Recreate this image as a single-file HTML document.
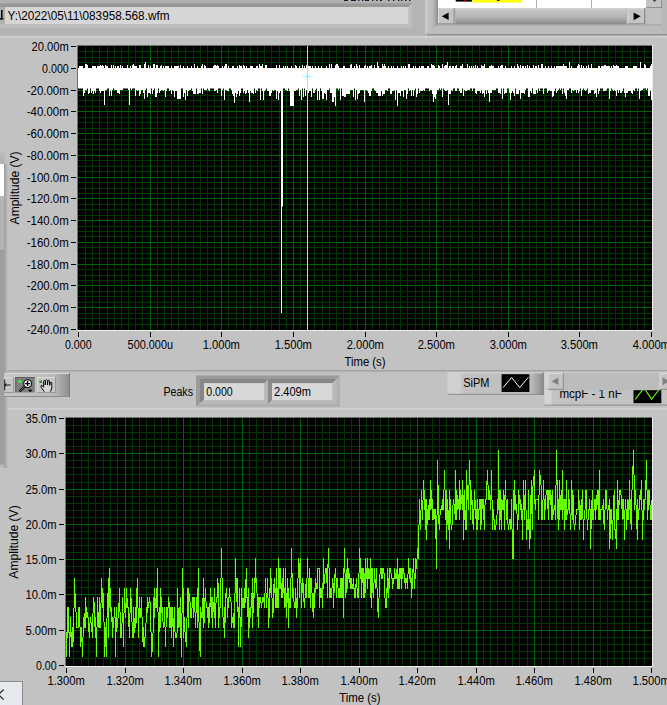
<!DOCTYPE html>
<html><head><meta charset="utf-8"><title>LabVIEW</title>
<style>html,body{margin:0;padding:0;background:#c2c2c2;overflow:hidden}body{width:667px;height:705px;font-family:"Liberation Sans",sans-serif}svg{display:block;position:absolute;left:0;top:0}text{font-family:"Liberation Sans",sans-serif}</style>
</head><body><svg width="667" height="705" viewBox="0 0 667 705" font-family="'Liberation Sans', sans-serif" font-size="12"><defs>
<linearGradient id="gthumb" x1="0" y1="0" x2="0" y2="1"><stop offset="0" stop-color="#cacaca"/><stop offset="0.55" stop-color="#b4b4b4"/><stop offset="1" stop-color="#888888"/></linearGradient>
<linearGradient id="gpal" x1="0" y1="0" x2="1" y2="0"><stop offset="0" stop-color="#c6c6c6"/><stop offset="0.75" stop-color="#bcbcbc"/><stop offset="1" stop-color="#8c8c8c"/></linearGradient>
<linearGradient id="gleg" x1="0" y1="0" x2="1" y2="0"><stop offset="0" stop-color="#d2d2d2"/><stop offset="0.12" stop-color="#d0d0d0"/><stop offset="0.16" stop-color="#c2c2c2"/><stop offset="0.86" stop-color="#bebebe"/><stop offset="1" stop-color="#8c8c8c"/></linearGradient>
<linearGradient id="gshadow" x1="0" y1="0" x2="1" y2="0"><stop offset="0" stop-color="#9c9c9c"/><stop offset="1" stop-color="#c2c2c2"/></linearGradient>
<linearGradient id="gframeL" x1="0" y1="0" x2="1" y2="0"><stop offset="0" stop-color="#cccccc"/><stop offset="0.6" stop-color="#bababa"/><stop offset="0.85" stop-color="#a0a0a0"/><stop offset="1" stop-color="#8a8a8a"/></linearGradient>
<linearGradient id="gup" x1="0" y1="0" x2="0" y2="1"><stop offset="0" stop-color="#c2c2c2"/><stop offset="1" stop-color="#a8a8a8"/></linearGradient>
</defs><rect x="0" y="0" width="667" height="705" fill="#c2c2c2" /><rect x="0" y="0" width="667" height="36" fill="#b4b4b4" /><rect x="0" y="0" width="412" height="28" fill="#acacac" /><rect x="0" y="0" width="412" height="3.5" fill="#b0b0b0" /><rect x="0" y="3.5" width="412" height="3.5" fill="#989898" /><polygon points="408.5,7 412,3.5 412,28 0,28 0,24 408.5,24" fill="#bebebe"/><rect x="5" y="7" width="403.5" height="17" fill="#d6d6d6" /><rect x="0" y="7" width="5" height="17" fill="#b0b0b0" /><rect x="0" y="18" width="3.4" height="1.6" fill="#000" /><rect x="1" y="10" width="1.6" height="8" fill="#000" /><text x="7.5" y="20" font-size="12" text-anchor="start" fill="#000" textLength="162" lengthAdjust="spacingAndGlyphs" >Y:\2022\05\11\083958.568.wfm</text><rect x="344" y="0" width="4" height="1" fill="#1c1c30" /><rect x="351" y="0" width="5" height="1" fill="#1c1c30" /><rect x="358" y="0" width="1.4" height="1" fill="#1c1c30" /><rect x="362" y="0" width="1.4" height="1" fill="#1c1c30" /><rect x="365" y="0" width="4" height="1" fill="#1c1c30" /><rect x="372" y="0" width="1.4" height="1" fill="#1c1c30" /><rect x="376" y="0" width="1.4" height="1" fill="#1c1c30" /><rect x="380" y="0" width="2" height="1" fill="#1c1c30" /><rect x="388" y="0" width="1.4" height="1" fill="#1c1c30" /><rect x="393" y="0" width="1.4" height="1" fill="#1c1c30" /><rect x="398" y="0" width="1.4" height="1" fill="#1c1c30" /><rect x="401" y="0" width="1.4" height="1" fill="#1c1c30" /><rect x="405" y="0" width="1.4" height="1" fill="#1c1c30" /><rect x="409" y="0" width="1.4" height="1" fill="#1c1c30" /><rect x="425" y="0" width="242" height="34" fill="#bcbcbc" /><rect x="425" y="0" width="13" height="34" fill="url(#gframeL)" /><polygon points="425,34 438,24.5 667,24.5 667,34" fill="#bcbcbc"/><rect x="438" y="24.3" width="229" height="1.2" fill="#a4a4a4" /><rect x="427" y="34" width="240" height="1.2" fill="#909090" /><rect x="662" y="0" width="5" height="34" fill="#b8b8b8" /><rect x="438" y="0" width="208" height="8.3" fill="#ffffff" /><rect x="455.7" y="0" width="16.5" height="1.6" fill="#000" /><rect x="464" y="0" width="1" height="1.6" fill="#e00000" /><rect x="472.3" y="0" width="49" height="2.6" fill="#ffff00" /><rect x="497" y="0" width="2.5" height="1" fill="#000" /><rect x="536" y="0" width="1" height="8.3" fill="#b0b0b0" /><rect x="591" y="0" width="1" height="8.3" fill="#b0b0b0" /><rect x="646" y="0" width="16" height="7.6" fill="#c4c4c4" /><rect x="646" y="7.2" width="16" height="0.8" fill="#808080" /><rect x="661.2" y="0" width="0.8" height="8" fill="#808080" /><path d="M652.5,0 L656.5,0 L654.5,2 Z" fill="#404040"/><rect x="646" y="8.3" width="16" height="16" fill="#c0c0c0" /><rect x="438" y="8.3" width="208" height="16" fill="#b0b0b0" /><rect x="455.5" y="8.3" width="171" height="16" fill="url(#gthumb)" /><rect x="455.5" y="8.3" width="171" height="0.8" fill="#d4d4d4" /><rect x="438" y="8.3" width="16.6" height="16" fill="#c4c4c4" /><rect x="438" y="8.3" width="16.6" height="1" fill="#dcdcdc" /><rect x="438" y="8.3" width="1" height="16" fill="#dcdcdc" /><rect x="438" y="23.3" width="16.6" height="1" fill="#8c8c8c" /><rect x="453.6" y="8.3" width="1" height="16" fill="#8c8c8c" /><rect x="627.5" y="8.3" width="17.5" height="16" fill="#c4c4c4" /><rect x="627.5" y="8.3" width="17.5" height="1" fill="#dcdcdc" /><rect x="627.5" y="8.3" width="1" height="16" fill="#dcdcdc" /><rect x="627.5" y="23.3" width="17.5" height="1" fill="#8c8c8c" /><rect x="644.0" y="8.3" width="1" height="16" fill="#8c8c8c" /><path d="M441.8,16.3 L448.6,12.6 L448.6,20 Z" fill="#000"/><path d="M640.6,16.3 L633.6,12.4 L633.6,20.2 Z" fill="#000"/><rect x="0" y="36" width="667" height="2" fill="#cecece" /><rect x="0" y="370" width="667" height="1.4" fill="#a2a2a2" /><rect x="0" y="371.4" width="667" height="1" fill="#b4b4b4" /><rect x="0" y="408" width="667" height="1.6" fill="#d0d0d0" /><linearGradient id="gtopfade" x1="0" y1="0" x2="0" y2="1"><stop offset="0" stop-color="#c2c2c2"/><stop offset="1" stop-color="#aeaeae"/></linearGradient><rect x="0" y="150" width="5" height="14" fill="url(#gtopfade)" /><rect x="4" y="164" width="4" height="304" fill="url(#gshadow)" /><rect x="0" y="164" width="4" height="32.3" fill="#ffffff" /><rect x="0" y="196.3" width="4" height="53.5" fill="#b4b4b4" /><rect x="0" y="249.8" width="4" height="215" fill="#9e9e9e" /><rect x="0" y="464.5" width="4" height="3.5" fill="#bababa" /><rect x="77" y="45" width="576" height="286" fill="#eeeeee" /><rect x="77" y="45" width="575" height="285" fill="#707070" /><rect x="78" y="46" width="574" height="284" fill="#000" /><path d="M85.5,46V330M92.5,46V330M99.5,46V330M107.5,46V330M114.5,46V330M121.5,46V330M128.5,46V330M135.5,46V330M142.5,46V330M157.5,46V330M164.5,46V330M171.5,46V330M178.5,46V330M185.5,46V330M193.5,46V330M200.5,46V330M207.5,46V330M214.5,46V330M228.5,46V330M236.5,46V330M243.5,46V330M250.5,46V330M257.5,46V330M264.5,46V330M271.5,46V330M279.5,46V330M286.5,46V330M300.5,46V330M307.5,46V330M314.5,46V330M322.5,46V330M329.5,46V330M336.5,46V330M343.5,46V330M350.5,46V330M357.5,46V330M372.5,46V330M379.5,46V330M386.5,46V330M393.5,46V330M400.5,46V330M407.5,46V330M415.5,46V330M422.5,46V330M429.5,46V330M443.5,46V330M450.5,46V330M458.5,46V330M465.5,46V330M472.5,46V330M479.5,46V330M486.5,46V330M493.5,46V330M501.5,46V330M515.5,46V330M522.5,46V330M529.5,46V330M536.5,46V330M544.5,46V330M551.5,46V330M558.5,46V330M565.5,46V330M572.5,46V330M587.5,46V330M594.5,46V330M601.5,46V330M608.5,46V330M615.5,46V330M622.5,46V330M630.5,46V330M637.5,46V330M644.5,46V330M78,51.5H652M78,57.5H652M78,62.5H652M78,73.5H652M78,79.5H652M78,84.5H652M78,95.5H652M78,100.5H652M78,106.5H652M78,117.5H652M78,122.5H652M78,128.5H652M78,139.5H652M78,144.5H652M78,149.5H652M78,160.5H652M78,166.5H652M78,171.5H652M78,182.5H652M78,188.5H652M78,193.5H652M78,204.5H652M78,209.5H652M78,215.5H652M78,226.5H652M78,231.5H652M78,236.5H652M78,247.5H652M78,253.5H652M78,258.5H652M78,269.5H652M78,275.5H652M78,280.5H652M78,291.5H652M78,296.5H652M78,302.5H652M78,313.5H652M78,318.5H652M78,324.5H652" stroke="#003700" stroke-width="1" fill="none" shape-rendering="crispEdges"/><path d="M150.5,46V330M221.5,46V330M293.5,46V330M365.5,46V330M436.5,46V330M508.5,46V330M579.5,46V330M78,68.5H652M78,90.5H652M78,111.5H652M78,133.5H652M78,155.5H652M78,177.5H652M78,198.5H652M78,220.5H652M78,242.5H652M78,264.5H652M78,285.5H652M78,307.5H652" stroke="#006400" stroke-width="1" fill="none" shape-rendering="crispEdges"/><rect x="65" y="417" width="588" height="250" fill="#eeeeee" /><rect x="65" y="417" width="587" height="249" fill="#707070" /><rect x="66" y="418" width="586" height="248" fill="#000" /><path d="M73.5,418V666M81.5,418V666M88.5,418V666M95.5,418V666M103.5,418V666M110.5,418V666M117.5,418V666M132.5,418V666M139.5,418V666M146.5,418V666M154.5,418V666M161.5,418V666M168.5,418V666M176.5,418V666M190.5,418V666M198.5,418V666M205.5,418V666M212.5,418V666M220.5,418V666M227.5,418V666M234.5,418V666M249.5,418V666M256.5,418V666M263.5,418V666M271.5,418V666M278.5,418V666M285.5,418V666M293.5,418V666M307.5,418V666M315.5,418V666M322.5,418V666M329.5,418V666M337.5,418V666M344.5,418V666M351.5,418V666M366.5,418V666M373.5,418V666M380.5,418V666M388.5,418V666M395.5,418V666M402.5,418V666M410.5,418V666M424.5,418V666M432.5,418V666M439.5,418V666M446.5,418V666M454.5,418V666M461.5,418V666M468.5,418V666M483.5,418V666M490.5,418V666M497.5,418V666M505.5,418V666M512.5,418V666M519.5,418V666M527.5,418V666M541.5,418V666M549.5,418V666M556.5,418V666M563.5,418V666M571.5,418V666M578.5,418V666M585.5,418V666M600.5,418V666M607.5,418V666M614.5,418V666M622.5,418V666M629.5,418V666M636.5,418V666M644.5,418V666M66,425.5H652M66,432.5H652M66,439.5H652M66,446.5H652M66,460.5H652M66,467.5H652M66,474.5H652M66,482.5H652M66,496.5H652M66,503.5H652M66,510.5H652M66,517.5H652M66,531.5H652M66,538.5H652M66,545.5H652M66,552.5H652M66,566.5H652M66,573.5H652M66,580.5H652M66,587.5H652M66,601.5H652M66,609.5H652M66,616.5H652M66,623.5H652M66,637.5H652M66,644.5H652M66,651.5H652M66,658.5H652" stroke="#003700" stroke-width="1" fill="none" shape-rendering="crispEdges"/><path d="M125.5,418V666M183.5,418V666M242.5,418V666M300.5,418V666M359.5,418V666M417.5,418V666M476.5,418V666M534.5,418V666M593.5,418V666M66,453.5H652M66,489.5H652M66,524.5H652M66,559.5H652M66,594.5H652M66,630.5H652" stroke="#006400" stroke-width="1" fill="none" shape-rendering="crispEdges"/><path d="M78.5,67.8V88.0M79.5,66.4V88.0M80.5,66.4V86.5M81.5,66.4V86.5M82.5,66.4V86.5M83.5,67.8V95.5M84.5,67.8V92.5M85.5,63.6V89.5M86.5,63.6V89.5M87.5,65.0V88.0M88.5,67.8V94.0M89.5,67.8V92.5M90.5,67.8V86.5M91.5,67.8V92.5M92.5,66.4V91.0M93.5,66.4V94.0M94.5,66.4V91.0M95.5,66.4V92.5M96.5,67.8V88.0M97.5,66.4V88.0M98.5,66.4V88.0M99.5,66.4V91.0M100.5,65.0V92.5M101.5,66.4V91.0M102.5,65.0V91.0M103.5,66.4V91.0M104.5,69.2V104.5M105.5,65.0V89.5M106.5,66.4V89.5M107.5,66.4V88.0M108.5,67.8V88.0M109.5,67.8V95.5M110.5,67.8V91.0M111.5,65.0V95.5M112.5,67.8V89.5M113.5,65.0V88.0M114.5,67.8V89.5M115.5,66.4V89.5M116.5,67.8V89.5M117.5,66.4V92.5M118.5,66.4V92.5M119.5,67.8V94.0M120.5,65.0V89.5M121.5,67.8V89.5M122.5,66.4V89.5M123.5,67.8V88.0M124.5,67.8V88.0M125.5,67.8V88.0M126.5,67.8V88.0M127.5,65.0V88.0M128.5,67.8V89.5M129.5,67.8V104.5M130.5,66.4V86.5M131.5,67.8V89.5M132.5,65.0V85.0M133.5,63.6V88.0M134.5,66.4V88.0M135.5,66.4V95.5M136.5,66.4V89.5M137.5,67.8V91.0M138.5,69.2V89.5M139.5,65.0V95.5M140.5,65.0V94.0M141.5,67.8V89.5M142.5,67.8V89.5M143.5,67.8V92.5M144.5,63.6V98.5M145.5,62.2V89.5M146.5,67.8V88.0M147.5,67.8V97.0M148.5,65.0V92.5M149.5,69.2V92.5M150.5,66.4V94.0M151.5,69.2V88.0M152.5,69.2V94.0M153.5,63.6V89.5M154.5,63.6V88.0M155.5,67.8V97.0M156.5,65.0V97.0M157.5,65.0V92.5M158.5,67.8V88.0M159.5,67.8V92.5M160.5,66.4V91.0M161.5,65.0V89.5M162.5,67.8V89.5M163.5,66.4V91.0M164.5,67.8V89.5M165.5,66.4V97.0M166.5,66.4V91.0M167.5,66.4V85.0M168.5,66.4V85.0M169.5,69.2V91.0M170.5,69.2V89.5M171.5,66.4V94.0M172.5,67.8V89.5M173.5,67.8V91.0M174.5,66.4V97.0M175.5,66.4V91.0M176.5,66.4V91.0M177.5,66.4V98.5M178.5,66.4V98.5M179.5,67.8V98.5M180.5,65.0V98.5M181.5,67.8V86.5M182.5,67.8V86.5M183.5,66.4V97.0M184.5,67.8V92.5M185.5,67.8V100.0M186.5,67.8V89.5M187.5,66.4V95.5M188.5,67.8V91.0M189.5,67.8V89.5M190.5,69.2V89.5M191.5,66.4V85.0M192.5,67.8V91.0M193.5,67.8V94.0M194.5,63.6V94.0M195.5,67.8V94.0M196.5,69.2V88.0M197.5,66.4V94.0M198.5,67.8V94.0M199.5,70.8V92.5M200.5,67.8V92.5M201.5,66.4V86.5M202.5,63.6V94.0M203.5,67.8V86.5M204.5,65.0V89.5M205.5,66.4V89.5M206.5,67.8V89.5M207.5,67.8V86.5M208.5,67.8V89.5M209.5,69.2V91.0M210.5,67.8V85.0M211.5,67.8V85.0M212.5,69.2V88.0M213.5,66.4V88.0M214.5,65.0V91.0M215.5,65.0V91.0M216.5,66.4V89.5M217.5,65.0V92.5M218.5,66.4V86.5M219.5,67.8V86.5M220.5,69.2V88.0M221.5,67.8V95.5M222.5,66.4V89.5M223.5,67.8V88.0M224.5,66.4V100.0M225.5,63.6V89.5M226.5,63.6V89.5M227.5,67.8V91.0M228.5,66.4V91.0M229.5,67.8V86.5M230.5,67.8V86.5M231.5,67.8V89.5M232.5,66.4V94.0M233.5,66.4V95.5M234.5,67.8V103.0M235.5,67.8V92.5M236.5,67.8V97.0M237.5,66.4V94.0M238.5,67.8V91.0M239.5,65.0V95.5M240.5,66.4V92.5M241.5,66.4V86.5M242.5,67.8V88.0M243.5,65.0V92.5M244.5,66.4V91.0M245.5,67.8V94.0M246.5,66.4V92.5M247.5,67.8V89.5M248.5,67.8V92.5M249.5,67.8V101.5M250.5,66.4V91.0M251.5,66.4V92.5M252.5,66.4V92.5M253.5,67.8V94.0M254.5,67.8V85.0M255.5,67.8V92.5M256.5,66.4V89.5M257.5,66.4V91.0M258.5,67.8V88.0M259.5,63.6V85.0M260.5,66.4V100.0M261.5,66.4V88.0M262.5,63.6V91.0M263.5,67.8V100.0M264.5,67.8V91.0M265.5,65.0V89.5M266.5,65.0V85.0M267.5,67.8V91.0M268.5,67.8V91.0M269.5,67.8V95.5M270.5,67.8V95.5M271.5,67.8V92.5M272.5,70.8V89.5M273.5,67.8V91.0M274.5,67.8V89.5M275.5,67.8V89.5M276.5,65.0V98.5M277.5,67.8V91.0M278.5,67.8V100.0M279.5,65.0V92.5M280.5,70.8V91.0M281.5,69.2V91.0M282.5,69.2V94.0M283.5,66.4V86.5M284.5,70.8V86.5M285.5,66.4V89.5M286.5,69.2V89.5M287.5,66.4V91.0M288.5,67.8V88.0M289.5,67.8V91.0M290.5,67.8V106.0M291.5,66.4V106.0M292.5,67.8V106.0M293.5,67.8V106.0M294.5,67.8V91.0M295.5,65.0V91.0M296.5,66.4V89.5M297.5,67.8V89.5M298.5,67.8V88.0M299.5,66.4V95.5M300.5,67.8V89.5M301.5,67.8V100.0M302.5,65.0V85.0M303.5,67.8V97.0M304.5,66.4V85.0M305.5,67.8V95.5M306.5,65.0V89.5M307.5,67.8V91.0M308.5,66.4V92.5M309.5,66.4V91.0M310.5,66.4V91.0M311.5,69.2V97.0M312.5,66.4V88.0M313.5,67.8V92.5M314.5,67.8V92.5M315.5,66.4V89.5M316.5,67.8V85.0M317.5,67.8V100.0M318.5,66.4V91.0M319.5,67.8V100.0M320.5,69.2V85.0M321.5,66.4V91.0M322.5,67.8V98.5M323.5,67.8V98.5M324.5,67.8V92.5M325.5,67.8V94.0M326.5,66.4V100.0M327.5,67.8V89.5M328.5,67.8V89.5M329.5,63.6V88.0M330.5,67.8V92.5M331.5,63.6V92.5M332.5,67.8V101.5M333.5,67.8V101.5M334.5,67.8V97.0M335.5,65.0V106.0M336.5,63.6V88.0M337.5,63.6V86.5M338.5,66.4V89.5M339.5,67.8V85.0M340.5,67.8V100.0M341.5,67.8V88.0M342.5,67.8V95.5M343.5,66.4V95.5M344.5,66.4V97.0M345.5,67.8V97.0M346.5,67.8V94.0M347.5,69.2V94.0M348.5,67.8V94.0M349.5,70.8V94.0M350.5,65.0V89.5M351.5,63.6V89.5M352.5,69.2V89.5M353.5,67.8V97.0M354.5,66.4V85.0M355.5,67.8V100.0M356.5,63.6V89.5M357.5,66.4V98.5M358.5,67.8V94.0M359.5,65.0V92.5M360.5,67.8V89.5M361.5,69.2V89.5M362.5,67.8V89.5M363.5,67.8V89.5M364.5,66.4V101.5M365.5,65.0V89.5M366.5,67.8V89.5M367.5,66.4V91.0M368.5,67.8V92.5M369.5,66.4V95.5M370.5,66.4V95.5M371.5,65.0V91.0M372.5,67.8V88.0M373.5,67.8V88.0M374.5,65.0V89.5M375.5,67.8V91.0M376.5,67.8V92.5M377.5,62.2V92.5M378.5,66.4V95.5M379.5,70.8V95.5M380.5,67.8V95.5M381.5,67.8V91.0M382.5,63.6V95.5M383.5,66.4V94.0M384.5,63.6V94.0M385.5,66.4V89.5M386.5,67.8V89.5M387.5,67.8V91.0M388.5,66.4V85.0M389.5,67.8V88.0M390.5,67.8V94.0M391.5,66.4V94.0M392.5,67.8V91.0M393.5,66.4V91.0M394.5,67.8V89.5M395.5,67.8V100.0M396.5,67.8V89.5M397.5,66.4V106.0M398.5,67.8V92.5M399.5,67.8V92.5M400.5,70.8V95.5M401.5,66.4V91.0M402.5,67.8V91.0M403.5,66.4V97.0M404.5,67.8V89.5M405.5,66.4V89.5M406.5,67.8V98.5M407.5,67.8V94.0M408.5,63.6V88.0M409.5,63.6V91.0M410.5,67.8V89.5M411.5,70.8V95.5M412.5,67.8V89.5M413.5,66.4V95.5M414.5,67.8V89.5M415.5,66.4V88.0M416.5,67.8V97.0M417.5,67.8V94.0M418.5,67.8V88.0M419.5,66.4V92.5M420.5,67.8V91.0M421.5,66.4V91.0M422.5,66.4V91.0M423.5,66.4V89.5M424.5,69.2V91.0M425.5,67.8V88.0M426.5,67.8V88.0M427.5,66.4V86.5M428.5,66.4V86.5M429.5,69.2V91.0M430.5,67.8V89.5M431.5,63.6V89.5M432.5,65.0V94.0M433.5,65.0V101.5M434.5,66.4V97.0M435.5,67.8V98.5M436.5,67.8V94.0M437.5,67.8V89.5M438.5,65.0V89.5M439.5,66.4V88.0M440.5,67.8V89.5M441.5,67.8V88.0M442.5,63.6V97.0M443.5,67.8V88.0M444.5,66.4V89.5M445.5,65.0V91.0M446.5,65.0V91.0M447.5,62.2V89.5M448.5,69.2V104.5M449.5,66.4V94.0M450.5,66.4V94.0M451.5,67.8V89.5M452.5,66.4V91.0M453.5,66.4V85.0M454.5,67.8V85.0M455.5,66.4V91.0M456.5,65.0V91.0M457.5,67.8V85.0M458.5,67.8V88.0M459.5,67.8V91.0M460.5,66.4V92.5M461.5,66.4V92.5M462.5,63.6V88.0M463.5,67.8V95.5M464.5,69.2V89.5M465.5,67.8V91.0M466.5,67.8V91.0M467.5,63.6V89.5M468.5,70.8V89.5M469.5,66.4V89.5M470.5,67.8V85.0M471.5,66.4V88.0M472.5,67.8V91.0M473.5,66.4V88.0M474.5,67.8V86.5M475.5,65.0V92.5M476.5,67.8V94.0M477.5,66.4V91.0M478.5,67.8V91.0M479.5,67.8V91.0M480.5,67.8V92.5M481.5,65.0V89.5M482.5,66.4V94.0M483.5,66.4V92.5M484.5,63.6V97.0M485.5,67.8V89.5M486.5,69.2V94.0M487.5,67.8V89.5M488.5,67.8V92.5M489.5,66.4V101.5M490.5,66.4V92.5M491.5,65.0V92.5M492.5,66.4V89.5M493.5,66.4V89.5M494.5,70.8V89.5M495.5,67.8V89.5M496.5,70.8V88.0M497.5,67.8V88.0M498.5,66.4V92.5M499.5,69.2V92.5M500.5,66.4V94.0M501.5,65.0V86.5M502.5,65.0V98.5M503.5,67.8V88.0M504.5,67.8V94.0M505.5,66.4V92.5M506.5,67.8V92.5M507.5,67.8V88.0M508.5,67.8V85.0M509.5,67.8V92.5M510.5,67.8V100.0M511.5,66.4V92.5M512.5,67.8V91.0M513.5,69.2V92.5M514.5,66.4V95.5M515.5,67.8V88.0M516.5,67.8V94.0M517.5,63.6V94.0M518.5,66.4V94.0M519.5,67.8V89.5M520.5,65.0V98.5M521.5,67.8V92.5M522.5,66.4V92.5M523.5,66.4V92.5M524.5,69.2V94.0M525.5,66.4V89.5M526.5,67.8V86.5M527.5,65.0V86.5M528.5,67.8V97.0M529.5,66.4V97.0M530.5,67.8V91.0M531.5,69.2V92.5M532.5,67.8V88.0M533.5,65.0V94.0M534.5,67.8V94.0M535.5,66.4V94.0M536.5,66.4V89.5M537.5,67.8V92.5M538.5,65.0V88.0M539.5,67.8V91.0M540.5,67.8V88.0M541.5,63.6V88.0M542.5,63.6V88.0M543.5,67.8V94.0M544.5,69.2V88.0M545.5,66.4V88.0M546.5,67.8V86.5M547.5,67.8V92.5M548.5,66.4V91.0M549.5,67.8V89.5M550.5,69.2V91.0M551.5,66.4V91.0M552.5,67.8V97.0M553.5,69.2V95.5M554.5,66.4V91.0M555.5,67.8V88.0M556.5,66.4V92.5M557.5,66.4V91.0M558.5,66.4V89.5M559.5,66.4V88.0M560.5,66.4V89.5M561.5,66.4V86.5M562.5,66.4V94.0M563.5,63.6V88.0M564.5,66.4V92.5M565.5,66.4V95.5M566.5,66.4V98.5M567.5,67.8V89.5M568.5,69.2V89.5M569.5,62.2V86.5M570.5,67.8V85.0M571.5,66.4V92.5M572.5,67.8V89.5M573.5,69.2V91.0M574.5,67.8V89.5M575.5,67.8V89.5M576.5,69.2V92.5M577.5,66.4V89.5M578.5,63.6V92.5M579.5,65.0V91.0M580.5,67.8V88.0M581.5,65.0V95.5M582.5,67.8V89.5M583.5,66.4V85.0M584.5,69.2V89.5M585.5,67.8V91.0M586.5,66.4V89.5M587.5,70.8V86.5M588.5,65.0V94.0M589.5,67.8V92.5M590.5,67.8V92.5M591.5,63.6V89.5M592.5,67.8V89.5M593.5,67.8V89.5M594.5,67.8V94.0M595.5,67.8V92.5M596.5,69.2V97.0M597.5,69.2V88.0M598.5,66.4V94.0M599.5,66.4V91.0M600.5,67.8V88.0M601.5,66.4V88.0M602.5,66.4V88.0M603.5,66.4V91.0M604.5,65.0V91.0M605.5,65.0V91.0M606.5,66.4V89.5M607.5,66.4V86.5M608.5,66.4V85.0M609.5,66.4V98.5M610.5,67.8V91.0M611.5,66.4V86.5M612.5,69.2V89.5M613.5,65.0V91.0M614.5,66.4V89.5M615.5,66.4V91.0M616.5,65.0V95.5M617.5,66.4V89.5M618.5,66.4V92.5M619.5,69.2V89.5M620.5,67.8V92.5M621.5,69.2V92.5M622.5,69.2V91.0M623.5,67.8V85.0M624.5,67.8V92.5M625.5,66.4V97.0M626.5,66.4V92.5M627.5,66.4V92.5M628.5,67.8V91.0M629.5,69.2V91.0M630.5,67.8V91.0M631.5,69.2V92.5M632.5,67.8V94.0M633.5,66.4V89.5M634.5,66.4V91.0M635.5,66.4V86.5M636.5,66.4V86.5M637.5,67.8V91.0M638.5,70.8V85.0M639.5,67.8V98.5M640.5,62.2V91.0M641.5,67.8V89.5M642.5,67.8V89.5M643.5,67.8V88.0M644.5,63.6V88.0M645.5,65.0V88.0M646.5,67.8V89.5M647.5,69.2V86.5M648.5,69.2V95.5M649.5,69.2V95.5M650.5,66.4V91.0M651.5,63.6V100.0" stroke="#fff" stroke-width="1" fill="none" shape-rendering="crispEdges"/><rect x="78" y="68" width="574" height="20.5" fill="#fff" /><rect x="281" y="88" width="2" height="118.5" fill="#fff" /><rect x="281" y="206" width="1" height="107" fill="#fff" /><rect x="307" y="46" width="1" height="284" fill="#8eeaff" /><path d="M302,76.5H313M304.5,73.5L310.5,79.5M310.5,73.5L304.5,79.5" stroke="#a8f0ff" stroke-width="0.9" fill="none"/><path d="M66.5,632V657M67.5,607V638M68.5,607V633M69.5,632V657M70.5,617V637M71.5,632V647M72.5,627V647M73.5,608V642M74.5,578V608M75.5,593V612M76.5,612V628M77.5,627V628M78.5,607V628M79.5,607V627M80.5,627V647M81.5,627V642M82.5,637V657M83.5,617V637M84.5,613V628M85.5,597V628M86.5,607V618M87.5,612V618M88.5,617V632M89.5,623V638M90.5,617V623M91.5,622V632M92.5,613V638M93.5,597V613M94.5,602V627M95.5,617V638M96.5,627V657M97.5,597V627M98.5,612V628M99.5,597V628M100.5,603V628M101.5,578V603M102.5,588V608M103.5,593V622M104.5,622V657M105.5,627V647M106.5,618V657M107.5,593V618M108.5,578V638M109.5,568V608M110.5,588V612M111.5,607V622M112.5,617V638M113.5,618V628M114.5,607V618M115.5,617V657M116.5,607V632M117.5,618V628M118.5,603V618M119.5,588V612M120.5,612V638M121.5,623V638M122.5,597V623M123.5,613V647M124.5,588V613M125.5,603V618M126.5,588V608M127.5,598V608M128.5,607V627M129.5,613V638M130.5,588V613M131.5,598V622M132.5,622V638M133.5,607V638M134.5,618V633M135.5,607V628M136.5,588V623M137.5,578V608M138.5,608V638M139.5,597V618M140.5,608V618M141.5,597V617M142.5,617V642M143.5,627V647M144.5,637V647M145.5,623V638M146.5,607V623M147.5,597V613M148.5,602V608M149.5,597V603M150.5,602V632M151.5,632V657M152.5,633V652M153.5,597V633M154.5,588V618M155.5,598V608M156.5,588V608M157.5,568V612M158.5,612V657M159.5,607V632M160.5,588V628M161.5,597V613M162.5,607V622M163.5,622V628M164.5,607V627M165.5,627V647M166.5,607V627M167.5,607V618M168.5,597V608M169.5,602V628M170.5,607V628M171.5,607V638M172.5,607V627M173.5,618V647M174.5,607V632M175.5,632V638M176.5,633V638M177.5,588V633M178.5,608V628M179.5,607V627M180.5,597V638M181.5,613V657M182.5,568V613M183.5,588V638M184.5,617V632M185.5,632V642M186.5,618V647M187.5,588V618M188.5,588V628M189.5,593V602M190.5,602V618M191.5,608V618M192.5,597V608M193.5,597V618M194.5,597V612M195.5,612V628M196.5,597V613M197.5,588V628M198.5,568V622M199.5,622V651M200.5,607V657M201.5,612V618M202.5,598V618M203.5,578V628M204.5,598V623M205.5,588V602M206.5,602V608M207.5,607V618M208.5,607V628M209.5,603V623M210.5,588V607M211.5,597V618M212.5,597V628M213.5,602V612M214.5,588V618M215.5,603V628M216.5,597V603M217.5,578V598M218.5,583V628M219.5,607V618M220.5,578V608M221.5,548V578M222.5,578V617M223.5,617V628M224.5,607V638M225.5,593V623M226.5,588V598M227.5,598V618M228.5,597V608M229.5,588V598M230.5,597V602M231.5,602V628M232.5,617V623M233.5,613V628M234.5,593V628M235.5,558V593M236.5,578V602M237.5,578V612M238.5,607V647M239.5,588V618M240.5,617V647M241.5,588V627M242.5,598V608M243.5,598V608M244.5,588V608M245.5,579V603M246.5,568V598M247.5,597V617M248.5,588V638M249.5,608V628M250.5,607V618M251.5,593V608M252.5,578V628M253.5,593V613M254.5,578V598M255.5,558V583M256.5,578V593M257.5,593V617M258.5,597V628M259.5,597V608M260.5,597V603M261.5,602V608M262.5,597V603M263.5,597V602M264.5,593V608M265.5,578V593M266.5,593V608M267.5,578V598M268.5,598V628M269.5,588V618M270.5,568V593M271.5,578V598M272.5,598V618M273.5,584V613M274.5,578V593M275.5,588V608M276.5,568V608M277.5,588V608M278.5,558V608M279.5,568V589M280.5,568V589M281.5,583V598M282.5,578V598M283.5,568V593M284.5,588V608M285.5,568V607M286.5,593V618M287.5,578V603M288.5,588V628M289.5,598V608M290.5,578V608M291.5,548V578M292.5,573V598M293.5,588V602M294.5,602V608M295.5,588V608M296.5,598V618M297.5,578V608M298.5,558V578M299.5,563V598M300.5,558V583M301.5,583V608M302.5,578V593M303.5,583V602M304.5,598V608M305.5,584V598M306.5,578V598M307.5,558V578M308.5,578V598M309.5,568V598M310.5,578V608M311.5,578V593M312.5,593V612M313.5,593V618M314.5,588V608M315.5,578V593M316.5,583V589M317.5,568V589M318.5,568V569M319.5,568V608M320.5,588V598M321.5,588V598M322.5,583V608M323.5,558V589M324.5,574V584M325.5,568V574M326.5,568V583M327.5,564V598M328.5,548V568M329.5,568V598M330.5,588V598M331.5,588V598M332.5,578V588M333.5,583V608M334.5,574V593M335.5,568V578M336.5,578V598M337.5,578V588M338.5,588V598M339.5,588V598M340.5,578V598M341.5,578V598M342.5,578V598M343.5,568V618M344.5,548V573M345.5,573V598M346.5,569V593M347.5,558V589M348.5,568V579M349.5,573V583M350.5,578V589M351.5,578V589M352.5,584V589M353.5,578V589M354.5,588V598M355.5,584V598M356.5,578V588M357.5,588V598M358.5,573V598M359.5,548V573M360.5,558V579M361.5,568V598M362.5,568V583M363.5,568V598M364.5,573V598M365.5,558V593M366.5,568V579M367.5,558V589M368.5,568V579M369.5,569V579M370.5,558V598M371.5,568V608M372.5,568V593M373.5,583V598M374.5,568V583M375.5,579V589M376.5,568V588M377.5,588V612M378.5,598V618M379.5,574V598M380.5,568V574M381.5,568V579M382.5,568V579M383.5,568V574M384.5,573V598M385.5,598V608M386.5,588V608M387.5,568V593M388.5,578V598M389.5,568V589M390.5,568V573M391.5,573V579M392.5,578V589M393.5,578V584M394.5,568V579M395.5,573V579M396.5,569V579M397.5,558V589M398.5,574V589M399.5,568V589M400.5,568V579M401.5,568V589M402.5,568V579M403.5,568V574M404.5,573V583M405.5,578V589M406.5,578V583M407.5,574V589M408.5,558V574M409.5,568V579M410.5,568V583M411.5,578V598M412.5,569V589M413.5,558V573M414.5,573V589M415.5,558V579M416.5,559V569M417.5,548V559M418.5,525V559M419.5,499V525M420.5,510V530M421.5,490V510M422.5,500V520M423.5,480V500M424.5,490V510M425.5,499V530M426.5,499V540M427.5,509V525M428.5,505V520M429.5,499V520M430.5,480V510M431.5,490V509M432.5,499V520M433.5,509V520M434.5,509V519M435.5,509V539M436.5,515V569M437.5,460V515M438.5,485V524M439.5,515V530M440.5,509V515M441.5,505V510M442.5,499V510M443.5,490V510M444.5,470V490M445.5,490V520M446.5,490V540M447.5,499V525M448.5,510V530M449.5,490V549M450.5,499V524M451.5,524V530M452.5,505V525M453.5,499V505M454.5,504V514M455.5,470V520M456.5,490V520M457.5,495V510M458.5,499V509M459.5,480V520M460.5,490V510M461.5,495V504M462.5,480V510M463.5,495V540M464.5,490V520M465.5,510V530M466.5,470V530M467.5,485V500M468.5,485V510M469.5,460V485M470.5,480V520M471.5,490V505M472.5,500V524M473.5,509V530M474.5,490V510M475.5,500V519M476.5,509V530M477.5,499V530M478.5,509V520M479.5,499V510M480.5,499V530M481.5,499V525M482.5,499V509M483.5,499V520M484.5,505V530M485.5,499V505M486.5,481V500M487.5,470V485M488.5,485V500M489.5,490V500M490.5,495V510M491.5,470V500M492.5,500V530M493.5,509V520M494.5,519V530M495.5,525V530M496.5,515V525M497.5,499V515M498.5,450V510M499.5,490V530M500.5,490V520M501.5,499V530M502.5,500V510M503.5,490V510M504.5,495V530M505.5,480V500M506.5,500V520M507.5,499V524M508.5,524V530M509.5,519V525M510.5,519V530M511.5,499V529M512.5,529V559M513.5,490V559M514.5,480V510M515.5,495V510M516.5,504V514M517.5,514V530M518.5,490V520M519.5,495V504M520.5,499V510M521.5,504V520M522.5,509V540M523.5,480V510M524.5,495V520M525.5,480V510M526.5,510V540M527.5,519V530M528.5,490V530M529.5,519V549M530.5,495V539M531.5,480V514M532.5,486V530M533.5,476V486M534.5,470V504M535.5,499V510M536.5,499V500M537.5,499V500M538.5,495V520M539.5,470V495M540.5,475V485M541.5,485V520M542.5,500V520M543.5,480V500M544.5,499V520M545.5,495V510M546.5,490V495M547.5,490V509M548.5,490V520M549.5,490V500M550.5,490V505M551.5,495V520M552.5,490V520M553.5,509V515M554.5,505V510M555.5,485V520M556.5,450V485M557.5,480V519M558.5,499V530M559.5,480V520M560.5,495V510M561.5,490V510M562.5,470V520M563.5,499V510M564.5,499V530M565.5,499V520M566.5,480V520M567.5,509V515M568.5,490V510M569.5,499V514M570.5,514V530M571.5,480V515M572.5,490V520M573.5,495V524M574.5,524V530M575.5,515V525M576.5,509V515M577.5,509V510M578.5,490V510M579.5,500V530M580.5,505V520M581.5,499V520M582.5,490V519M583.5,519V540M584.5,510V520M585.5,490V510M586.5,490V519M587.5,519V530M588.5,509V520M589.5,499V510M590.5,509V549M591.5,500V529M592.5,490V520M593.5,509V520M594.5,499V510M595.5,499V520M596.5,495V510M597.5,490V505M598.5,490V520M599.5,470V520M600.5,509V520M601.5,509V510M602.5,505V510M603.5,499V524M604.5,510V530M605.5,490V510M606.5,490V509M607.5,509V520M608.5,505V510M609.5,499V549M610.5,509V539M611.5,509V524M612.5,520V540M613.5,495V520M614.5,490V530M615.5,529V539M616.5,509V549M617.5,480V520M618.5,500V520M619.5,490V505M620.5,490V495M621.5,495V509M622.5,499V520M623.5,499V519M624.5,510V540M625.5,499V510M626.5,509V530M627.5,499V520M628.5,500V520M629.5,480V510M630.5,499V524M631.5,490V530M632.5,466V490M633.5,450V475M634.5,475V510M635.5,490V505M636.5,505V529M637.5,499V540M638.5,509V520M639.5,495V510M640.5,490V500M641.5,480V510M642.5,510V540M643.5,499V520M644.5,499V510M645.5,480V500M646.5,460V490M647.5,490V520M648.5,490V510M649.5,490V505M650.5,505V520M651.5,500V520" stroke="#66ff00" stroke-width="1" fill="none" shape-rendering="crispEdges"/><rect x="71" y="46" width="5" height="1" fill="#000" /><rect x="71" y="68" width="5" height="1" fill="#000" /><rect x="71" y="90" width="5" height="1" fill="#000" /><rect x="71" y="111" width="5" height="1" fill="#000" /><rect x="71" y="133" width="5" height="1" fill="#000" /><rect x="71" y="155" width="5" height="1" fill="#000" /><rect x="71" y="177" width="5" height="1" fill="#000" /><rect x="71" y="198" width="5" height="1" fill="#000" /><rect x="71" y="220" width="5" height="1" fill="#000" /><rect x="71" y="242" width="5" height="1" fill="#000" /><rect x="71" y="264" width="5" height="1" fill="#000" /><rect x="71" y="285" width="5" height="1" fill="#000" /><rect x="71" y="307" width="5" height="1" fill="#000" /><rect x="71" y="329" width="5" height="1" fill="#000" /><rect x="78" y="332" width="1" height="5" fill="#000" /><rect x="150" y="332" width="1" height="5" fill="#000" /><rect x="221" y="332" width="1" height="5" fill="#000" /><rect x="293" y="332" width="1" height="5" fill="#000" /><rect x="365" y="332" width="1" height="5" fill="#000" /><rect x="436" y="332" width="1" height="5" fill="#000" /><rect x="508" y="332" width="1" height="5" fill="#000" /><rect x="579" y="332" width="1" height="5" fill="#000" /><rect x="651" y="332" width="1" height="5" fill="#000" /><text x="68.8" y="50.8" font-size="12" text-anchor="end" fill="#000" textLength="37.3" lengthAdjust="spacingAndGlyphs" >20.00m</text><text x="68.8" y="72.8" font-size="12" text-anchor="end" fill="#000" textLength="26.7" lengthAdjust="spacingAndGlyphs" >0.000</text><text x="68.8" y="94.8" font-size="12" text-anchor="end" fill="#000" textLength="42.1" lengthAdjust="spacingAndGlyphs" >-20.00m</text><text x="68.8" y="115.8" font-size="12" text-anchor="end" fill="#000" textLength="42.1" lengthAdjust="spacingAndGlyphs" >-40.00m</text><text x="68.8" y="137.8" font-size="12" text-anchor="end" fill="#000" textLength="42.1" lengthAdjust="spacingAndGlyphs" >-60.00m</text><text x="68.8" y="159.8" font-size="12" text-anchor="end" fill="#000" textLength="42.1" lengthAdjust="spacingAndGlyphs" >-80.00m</text><text x="68.8" y="181.8" font-size="12" text-anchor="end" fill="#000" textLength="42.1" lengthAdjust="spacingAndGlyphs" >-100.0m</text><text x="68.8" y="202.8" font-size="12" text-anchor="end" fill="#000" textLength="42.1" lengthAdjust="spacingAndGlyphs" >-120.0m</text><text x="68.8" y="224.8" font-size="12" text-anchor="end" fill="#000" textLength="42.1" lengthAdjust="spacingAndGlyphs" >-140.0m</text><text x="68.8" y="246.8" font-size="12" text-anchor="end" fill="#000" textLength="42.1" lengthAdjust="spacingAndGlyphs" >-160.0m</text><text x="68.8" y="268.8" font-size="12" text-anchor="end" fill="#000" textLength="42.1" lengthAdjust="spacingAndGlyphs" >-180.0m</text><text x="68.8" y="289.8" font-size="12" text-anchor="end" fill="#000" textLength="42.1" lengthAdjust="spacingAndGlyphs" >-200.0m</text><text x="68.8" y="311.8" font-size="12" text-anchor="end" fill="#000" textLength="42.1" lengthAdjust="spacingAndGlyphs" >-220.0m</text><text x="68.8" y="333.8" font-size="12" text-anchor="end" fill="#000" textLength="42.1" lengthAdjust="spacingAndGlyphs" >-240.0m</text><text x="78.3" y="348.8" font-size="12" text-anchor="middle" fill="#000" textLength="26.7" lengthAdjust="spacingAndGlyphs" >0.000</text><text x="150.3" y="348.8" font-size="12" text-anchor="middle" fill="#000" textLength="45.4" lengthAdjust="spacingAndGlyphs" >500.000u</text><text x="221.3" y="348.8" font-size="12" text-anchor="middle" fill="#000" textLength="37.3" lengthAdjust="spacingAndGlyphs" >1.000m</text><text x="293.3" y="348.8" font-size="12" text-anchor="middle" fill="#000" textLength="37.3" lengthAdjust="spacingAndGlyphs" >1.500m</text><text x="365.3" y="348.8" font-size="12" text-anchor="middle" fill="#000" textLength="37.3" lengthAdjust="spacingAndGlyphs" >2.000m</text><text x="436.3" y="348.8" font-size="12" text-anchor="middle" fill="#000" textLength="37.3" lengthAdjust="spacingAndGlyphs" >2.500m</text><text x="508.3" y="348.8" font-size="12" text-anchor="middle" fill="#000" textLength="37.3" lengthAdjust="spacingAndGlyphs" >3.000m</text><text x="579.3" y="348.8" font-size="12" text-anchor="middle" fill="#000" textLength="37.3" lengthAdjust="spacingAndGlyphs" >3.500m</text><text x="651.3" y="348.8" font-size="12" text-anchor="middle" fill="#000" textLength="37.3" lengthAdjust="spacingAndGlyphs" >4.000m</text><text x="365" y="365.6" font-size="12" text-anchor="middle" fill="#000" textLength="41" lengthAdjust="spacingAndGlyphs" >Time (s)</text><text transform="translate(19,224.4) rotate(-90)" font-size="12" textLength="73" lengthAdjust="spacingAndGlyphs">Amplitude (V)</text><rect x="59" y="418" width="5" height="1" fill="#000" /><rect x="59" y="453" width="5" height="1" fill="#000" /><rect x="59" y="489" width="5" height="1" fill="#000" /><rect x="59" y="524" width="5" height="1" fill="#000" /><rect x="59" y="559" width="5" height="1" fill="#000" /><rect x="59" y="594" width="5" height="1" fill="#000" /><rect x="59" y="630" width="5" height="1" fill="#000" /><rect x="59" y="665" width="5" height="1" fill="#000" /><rect x="66" y="668" width="1" height="5" fill="#000" /><rect x="125" y="668" width="1" height="5" fill="#000" /><rect x="183" y="668" width="1" height="5" fill="#000" /><rect x="242" y="668" width="1" height="5" fill="#000" /><rect x="300" y="668" width="1" height="5" fill="#000" /><rect x="359" y="668" width="1" height="5" fill="#000" /><rect x="417" y="668" width="1" height="5" fill="#000" /><rect x="476" y="668" width="1" height="5" fill="#000" /><rect x="534" y="668" width="1" height="5" fill="#000" /><rect x="593" y="668" width="1" height="5" fill="#000" /><rect x="651" y="668" width="1" height="5" fill="#000" /><text x="56.7" y="422.8" font-size="12" text-anchor="end" fill="#000" textLength="31.2" lengthAdjust="spacingAndGlyphs" >35.0m</text><text x="56.7" y="457.8" font-size="12" text-anchor="end" fill="#000" textLength="31.2" lengthAdjust="spacingAndGlyphs" >30.0m</text><text x="56.7" y="493.8" font-size="12" text-anchor="end" fill="#000" textLength="31.2" lengthAdjust="spacingAndGlyphs" >25.0m</text><text x="56.7" y="528.8" font-size="12" text-anchor="end" fill="#000" textLength="31.2" lengthAdjust="spacingAndGlyphs" >20.0m</text><text x="56.7" y="563.8" font-size="12" text-anchor="end" fill="#000" textLength="31.2" lengthAdjust="spacingAndGlyphs" >15.0m</text><text x="56.7" y="598.8" font-size="12" text-anchor="end" fill="#000" textLength="31.2" lengthAdjust="spacingAndGlyphs" >10.0m</text><text x="56.7" y="634.8" font-size="12" text-anchor="end" fill="#000" textLength="31.2" lengthAdjust="spacingAndGlyphs" >5.00m</text><text x="56.7" y="669.8" font-size="12" text-anchor="end" fill="#000" textLength="20.7" lengthAdjust="spacingAndGlyphs" >0.00</text><text x="66.2" y="684.7" font-size="12" text-anchor="middle" fill="#000" textLength="37.3" lengthAdjust="spacingAndGlyphs" >1.300m</text><text x="125.2" y="684.7" font-size="12" text-anchor="middle" fill="#000" textLength="37.3" lengthAdjust="spacingAndGlyphs" >1.320m</text><text x="183.2" y="684.7" font-size="12" text-anchor="middle" fill="#000" textLength="37.3" lengthAdjust="spacingAndGlyphs" >1.340m</text><text x="242.2" y="684.7" font-size="12" text-anchor="middle" fill="#000" textLength="37.3" lengthAdjust="spacingAndGlyphs" >1.360m</text><text x="300.2" y="684.7" font-size="12" text-anchor="middle" fill="#000" textLength="37.3" lengthAdjust="spacingAndGlyphs" >1.380m</text><text x="359.2" y="684.7" font-size="12" text-anchor="middle" fill="#000" textLength="37.3" lengthAdjust="spacingAndGlyphs" >1.400m</text><text x="417.2" y="684.7" font-size="12" text-anchor="middle" fill="#000" textLength="37.3" lengthAdjust="spacingAndGlyphs" >1.420m</text><text x="476.2" y="684.7" font-size="12" text-anchor="middle" fill="#000" textLength="37.3" lengthAdjust="spacingAndGlyphs" >1.440m</text><text x="534.2" y="684.7" font-size="12" text-anchor="middle" fill="#000" textLength="37.3" lengthAdjust="spacingAndGlyphs" >1.460m</text><text x="593.2" y="684.7" font-size="12" text-anchor="middle" fill="#000" textLength="37.3" lengthAdjust="spacingAndGlyphs" >1.480m</text><text x="651.2" y="684.7" font-size="12" text-anchor="middle" fill="#000" textLength="37.3" lengthAdjust="spacingAndGlyphs" >1.500m</text><text x="359.9" y="702" font-size="12" text-anchor="middle" fill="#000" textLength="41.4" lengthAdjust="spacingAndGlyphs" >Time (s)</text><text transform="translate(18.2,578.7) rotate(-90)" font-size="12" textLength="73.4" lengthAdjust="spacingAndGlyphs">Amplitude (V)</text><rect x="4" y="373" width="66" height="24" fill="url(#gpal)" /><rect x="4" y="373" width="66" height="1" fill="#d8d8d8" /><rect x="4" y="396" width="66" height="1" fill="#8c8c8c" /><rect x="69" y="373" width="1" height="24" fill="#7c7c7c" /><rect x="4" y="377" width="9.6" height="15.6" fill="#c6c6c6" /><rect x="13" y="377" width="0.8" height="15.6" fill="#8c8c8c" /><rect x="4" y="392" width="9.6" height="0.8" fill="#8c8c8c" /><rect x="4" y="377" width="9.6" height="0.8" fill="#dadada" /><path d="M4.7,379.5V390.5 M4.7,385H10.5 M4.7,385L6.2,383.4 M4.7,385L6.2,386.6" stroke="#000" stroke-width="0.9" fill="none"/><rect x="15.3" y="377" width="19.4" height="15.8" fill="#7e7e7e" /><rect x="15.3" y="377" width="19.4" height="0.9" fill="#5c5c5c" /><rect x="15.3" y="377" width="0.9" height="15.8" fill="#5c5c5c" /><rect x="15.3" y="392" width="19.4" height="0.8" fill="#a8a8a8" /><circle cx="27.6" cy="383.6" r="3.9" fill="#f4f4ff" stroke="#000" stroke-width="1.1"/><path d="M25.1,383.6H30.1M27.6,381.1V386.1" stroke="#000" stroke-width="1.4" fill="none"/><path d="M24.6,386.6L19.6,391.4" stroke="#000" stroke-width="2.2" fill="none"/><path d="M24.4,386.8L19.9,391.1" stroke="#a0a0a0" stroke-width="0.8" fill="none"/><rect x="18.5" y="380.3" width="2.6" height="2.6" fill="#30ff30" /><path d="M27.8,389.8H32.6L30.2,392.2Z" fill="#000"/><rect x="37" y="377" width="18.8" height="15.8" fill="#c6c6c6" /><rect x="37" y="377" width="18.8" height="0.8" fill="#dcdcdc" /><rect x="37" y="377" width="0.8" height="15.8" fill="#dcdcdc" /><rect x="37" y="392" width="18.8" height="0.8" fill="#8c8c8c" /><rect x="55" y="377" width="0.8" height="15.8" fill="#8c8c8c" /><rect x="39.4" y="380.4" width="2.6" height="2.6" fill="#3c8c3c" /><path d="M44.2,391.6 L41.3,387.4 Q40.2,385.4 41.9,385.3 L43.6,387.2 L43.6,381.2 Q44.4,379.4 45.2,381.2 L45.3,385 L45.6,380.4 Q46.5,378.6 47.4,380.4 L47.5,385 L47.9,381 Q48.8,379.4 49.6,381 L49.7,385.4 L50.2,382.8 Q51,381.4 51.8,382.8 L51.8,388 L50.4,391.6" stroke="#000" stroke-width="0.95" fill="#d6d6d6" stroke-linejoin="round"/><text x="163.4" y="395.6" font-size="12" text-anchor="start" fill="#000" textLength="29.6" lengthAdjust="spacingAndGlyphs" >Peaks</text><polygon points="196,375.4 340,375.4 336.4,379 199.6,379 199.6,403.5 196,407" fill="#9a9a9a"/><polygon points="199.6,379 336.4,379 332.2,383.2 204,383.2 204,400 199.6,403.5" fill="#868686"/><polygon points="204,400 332.2,400 332.2,383.2 336.4,379 336.4,403.5 199.6,403.5" fill="#bababa"/><polygon points="199.6,403.5 336.4,403.5 336.4,379 340,375.4 340,407 196,407" fill="#b0b0b0"/><polygon points="264.2,383.2 268,379.4 268,403.5 264.2,400" fill="#b6b6b6"/><polygon points="272,383.2 268,379.4 268,403.5 272,400" fill="#8a8a8a"/><rect x="204" y="383.2" width="60.2" height="16.8" fill="#d8d8d8" /><rect x="272" y="383.2" width="60.2" height="16.8" fill="#d8d8d8" /><text x="206.3" y="395.6" font-size="12" text-anchor="start" fill="#000" textLength="26.4" lengthAdjust="spacingAndGlyphs" >0.000</text><text x="274" y="395.6" font-size="12" text-anchor="start" fill="#000" textLength="37" lengthAdjust="spacingAndGlyphs" >2.409m</text><rect x="447.6" y="372.4" width="96" height="22.4" fill="url(#gleg)" /><rect x="447.6" y="372.4" width="96" height="1" fill="#d8d8d8" /><rect x="447.6" y="393.8" width="96" height="1" fill="#8a8a8a" /><rect x="542.6" y="372.4" width="1" height="22.4" fill="#808080" /><text x="463.3" y="386.7" font-size="12" text-anchor="start" fill="#000" textLength="26.2" lengthAdjust="spacingAndGlyphs" >SiPM</text><rect x="501.6" y="374.2" width="27.8" height="17.8" fill="#000" /><path d="M503,387.6L511.6,377.4L519.7,387.6L528.3,377.4" stroke="#fff" stroke-width="1" fill="none"/><rect x="544.5" y="371.8" width="123" height="33.6" fill="#c2c2c2" /><rect x="544.5" y="371.8" width="7" height="33.6" fill="#d4d4d4" /><rect x="544.5" y="371.8" width="123" height="1" fill="#d0d0d0" /><rect x="544.5" y="404.6" width="123" height="1" fill="#8c8c8c" /><text x="559.4" y="397.9" font-size="12" text-anchor="start" fill="#000" textLength="62.4" lengthAdjust="spacingAndGlyphs" >mcpF - 1 nF</text><rect x="633.5" y="386" width="27.8" height="17.2" fill="#000" /><path d="M635.2,399.4L644,388L651.6,399.4L660.2,388" stroke="#66ff00" stroke-width="1.1" fill="none"/><rect x="547.6" y="372.8" width="120" height="17.4" fill="#bcbcbc" /><rect x="547.6" y="372.8" width="16.2" height="17" fill="#c4c4c4" /><rect x="547.6" y="372.8" width="16.2" height="1" fill="#dcdcdc" /><rect x="547.6" y="372.8" width="1" height="17" fill="#dcdcdc" /><rect x="547.6" y="388.8" width="16.2" height="1" fill="#8c8c8c" /><rect x="562.8000000000001" y="372.8" width="1" height="17" fill="#8c8c8c" /><rect x="659.5" y="372.8" width="16" height="17" fill="#c4c4c4" /><rect x="659.5" y="372.8" width="16" height="1" fill="#dcdcdc" /><rect x="659.5" y="372.8" width="1" height="17" fill="#dcdcdc" /><rect x="659.5" y="388.8" width="16" height="1" fill="#8c8c8c" /><rect x="674.5" y="372.8" width="1" height="17" fill="#8c8c8c" /><path d="M551.6,381.2L558.4,377.4L558.4,385Z" fill="#808080"/><path d="M669,381.2L662.6,377.2L662.6,385.2Z" fill="#808080"/><rect x="0" y="681" width="23" height="24" fill="#8c8c8c" /><rect x="0" y="682" width="22" height="23" fill="#e6e9ee" /><path d="M3.6,689.6L-1.5,694.6L3.6,699.6" stroke="#222" stroke-width="1.2" fill="none"/></svg></body></html>
